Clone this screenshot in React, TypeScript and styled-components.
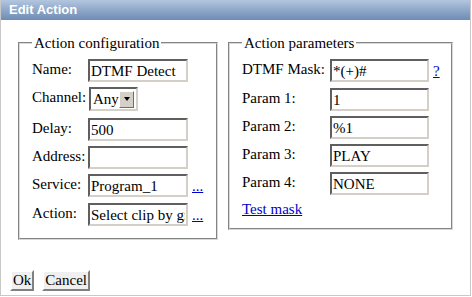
import styled, { createGlobalStyle } from 'styled-components'

import type { FC, ReactNode } from 'react'

const GlobalStyle = createGlobalStyle`
  html, body {
    margin: 0;
    padding: 0;
    background: #ffffff;
  }

  body {
    font-family: 'Liberation Serif', 'Times New Roman', serif;
    font-size: 15px;
    color: #000000;
  }
`

const Frame = styled.div`
  box-sizing: border-box;
  width: 471px;
  height: 296px;
  border: 1px solid #c8c8c8;
  border-top: none;
  display: flex;
  flex-direction: column;
  background: #ffffff;
`

const Header = styled.div`
  height: 20px;
  line-height: 20px;
  padding-left: 8px;
  background: linear-gradient(to bottom, #b3c6de 0%, #8ea8c9 50%, #6f8cb4 100%);
  color: #ffffff;
  font-family: 'Liberation Sans', Arial, sans-serif;
  font-weight: 700;
  font-size: 13px;
`

const Body = styled.div`
  display: flex;
  align-items: flex-start;
  gap: 10px;
  padding: 14px 0 0 17px;
`

const Fieldset = styled.fieldset<{ width: number; padBottom: number }>`
  box-sizing: border-box;
  width: ${({ width }) => width}px;
  margin: 0;
  padding: 7px 8px ${({ padBottom }) => padBottom}px 12px;
  border: 2px groove #d8d8d8;
`

const Legend = styled.legend`
  padding: 0 2px;
  line-height: 18px;
  font-size: 15px;
`

const FormGrid = styled.div<{ labelWidth: number }>`
  display: grid;
  grid-template-columns: ${({ labelWidth }) => labelWidth}px max-content max-content;
  row-gap: 5px;
  align-items: start;
`

const FieldLabel = styled.label`
  line-height: 20px;
  white-space: nowrap;
`

const TextInput = styled.input`
  box-sizing: border-box;
  width: ${({ width }) => width ?? 100}px;
  height: 23px;
  margin: 0;
  padding: 1px 1px 0;
  border-style: solid;
  border-width: 2px;
  border-color: #5f5f5f #d4d0c8 #d4d0c8 #5f5f5f;
  font-family: 'Liberation Serif', 'Times New Roman', serif;
  font-size: 15px;
  color: #000000;
  background: #ffffff;
  outline: none;
`

const SelectBox = styled.div`
  box-sizing: border-box;
  display: flex;
  align-items: center;
  justify-content: space-between;
  width: 49px;
  height: 24px;
  margin: 0 0 2px 1px;
  padding: 0 2px 0 2px;
  border-style: solid;
  border-width: 2px;
  border-color: #5f5f5f #d4d0c8 #d4d0c8 #5f5f5f;
  line-height: 20px;
`

const DropButton = styled.span`
  box-sizing: border-box;
  display: flex;
  align-items: center;
  justify-content: center;
  width: 15px;
  height: 17px;
  background: #d4d0c8;
  border-style: solid;
  border-width: 1px;
  border-color: #ffffff #6d6d6d #6d6d6d #ffffff;
`

const Arrow = styled.span`
  width: 0;
  height: 0;
  border-left: 3.5px solid transparent;
  border-right: 3.5px solid transparent;
  border-top: 4px solid #000000;
`

const Extra = styled.a`
  margin-left: 4px;
  line-height: 24px;
  color: #0000cc;
  text-decoration: underline;
  cursor: pointer;
`

const FullRow = styled.div`
  grid-column: 1 / -1;
  line-height: 18px;
`

const Link = styled.a`
  color: #0000cc;
  text-decoration: underline;
  cursor: pointer;
`

const Footer = styled.div`
  margin-top: auto;
  display: flex;
  gap: 8px;
  padding: 0 0 4px 9px;
`

const Button = styled.button`
  box-sizing: border-box;
  height: 21px;
  margin: 0;
  padding: 0 1px;
  background: #efefef;
  border-style: solid;
  border-width: 2px;
  border-color: #ffffff #808080 #808080 #ffffff;
  font-family: 'Liberation Serif', 'Times New Roman', serif;
  font-size: 15px;
  line-height: 15px;
  color: #000000;
`

interface RowProps {
  label: string
  children: ReactNode
  extra?: ReactNode
}

const Row: FC<RowProps> = ({ label, children, extra }) => (
  <>
    <FieldLabel>{label}</FieldLabel>
    {children}
    {extra ? <Extra>{extra}</Extra> : <span />}
  </>
)

const App: FC = () => (
  <>
    <GlobalStyle />
    <Frame>
      <Header>Edit Action</Header>
      <Body>
        <Fieldset width={200} padBottom={11}>
          <Legend>Action configuration</Legend>
          <FormGrid labelWidth={56}>
            <Row label="Name:">
              <TextInput defaultValue="DTMF Detect" />
            </Row>
            <Row label="Channel:">
              <SelectBox>
                <span>Any</span>
                <DropButton>
                  <Arrow />
                </DropButton>
              </SelectBox>
            </Row>
            <Row label="Delay:">
              <TextInput defaultValue="500" />
            </Row>
            <Row label="Address:">
              <TextInput defaultValue="" />
            </Row>
            <Row label="Service:" extra="...">
              <TextInput defaultValue="Program_1" />
            </Row>
            <Row label="Action:" extra="...">
              <TextInput defaultValue="Select clip by group" />
            </Row>
          </FormGrid>
        </Fieldset>
        <Fieldset width={225} padBottom={10}>
          <Legend>Action parameters</Legend>
          <FormGrid labelWidth={88}>
            <Row label="DTMF Mask:" extra="?">
              <TextInput width={99} defaultValue="*(+)#" />
            </Row>
            <Row label="Param 1:">
              <TextInput width={99} defaultValue="1" />
            </Row>
            <Row label="Param 2:">
              <TextInput width={99} defaultValue="%1" />
            </Row>
            <Row label="Param 3:">
              <TextInput width={99} defaultValue="PLAY" />
            </Row>
            <Row label="Param 4:">
              <TextInput width={99} defaultValue="NONE" />
            </Row>
            <FullRow>
              <Link>Test mask</Link>
            </FullRow>
          </FormGrid>
        </Fieldset>
      </Body>
      <Footer>
        <Button>Ok</Button>
        <Button>Cancel</Button>
      </Footer>
    </Frame>
  </>
)

export default App
